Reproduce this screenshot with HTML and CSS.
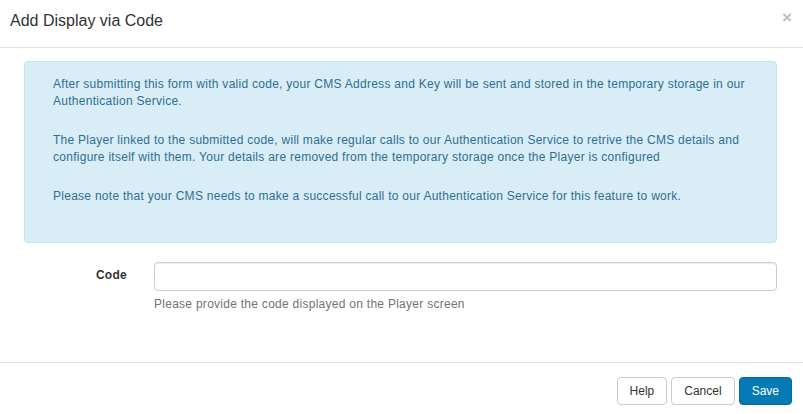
FILE: index.html
```html
<!DOCTYPE html>
<html lang="en">
<head>
<meta charset="utf-8">
<title>Add Display via Code</title>
<link rel="stylesheet" href="styles.css">
</head>
<body>
<div class="modal">
  <div class="modal-header">
    <h4 class="modal-title">Add Display via Code</h4>
    <button class="close" type="button" aria-label="Close">&times;</button>
  </div>
  <div class="modal-body">
    <div class="alert">
      <p>After submitting this form with valid code, your CMS Address and Key will be sent and stored in the temporary storage in our Authentication Service.</p>
      <p>The Player linked to the submitted code, will make regular calls to our Authentication Service to retrive the CMS details and configure itself with them. Your details are removed from the temporary storage once the Player is configured</p>
      <p>Please note that your CMS needs to make a successful call to our Authentication Service for this feature to work.</p>
    </div>
    <div class="form-group">
      <label class="control-label" for="code">Code</label>
      <div class="control">
        <input class="form-control" id="code" type="text">
        <span class="help-block">Please provide the code displayed on the Player screen</span>
      </div>
    </div>
  </div>
  <div class="modal-footer">
    <button class="btn" type="button">Help</button>
    <button class="btn" type="button">Cancel</button>
    <button class="btn btn-primary" type="button">Save</button>
  </div>
</div>
</body>
</html>
```
FILE: styles.css
```css
* { box-sizing: border-box; }
html, body { margin: 0; padding: 0; background: #fff; }
body {
  font-family: "Liberation Sans", Arial, sans-serif;
  font-size: 12px;
  line-height: 1.42857;
  color: #333;
}
.modal { width: 803px; }
.modal-header {
  position: relative;
  padding: 10px 10px 14px;
  border-bottom: 1px solid #e5e5e5;
}
.modal-title {
  margin: 0;
  font-size: 16px;
  font-weight: normal;
  line-height: 1.42857;
  color: #333;
}
.close {
  position: absolute;
  top: 8px;
  right: 11px;
  padding: 0;
  border: 0;
  background: none;
  font-family: "Liberation Sans", Arial, sans-serif;
  font-size: 17px;
  font-weight: bold;
  line-height: 20px;
  color: #bdbdbd;
  cursor: pointer;
}
.modal-body {
  padding: 13px 26px 49px 24px;
  letter-spacing: 0.27px;
}
.alert {
  padding: 14px 28px 14px;
  margin-bottom: 19px;
  background: #d9edf7;
  border: 1px solid #bce8f1;
  border-radius: 4px;
  color: #2d6f92;
}
.alert p { margin: 0 0 22px; }
.form-group {
  display: grid;
  grid-template-columns: 130px 1fr;
}
.control-label {
  text-align: right;
  padding: 5px 27px 0 0;
  font-weight: bold;
  color: #333;
}
.form-control {
  display: block;
  width: 100%;
  height: 29px;
  padding: 5px 10px;
  font: inherit;
  color: #555;
  background: #fff;
  border: 1px solid #ccc;
  border-radius: 4px;
  box-shadow: inset 0 1px 1px rgba(0,0,0,.075);
}
.help-block {
  display: block;
  margin-top: 5px;
  color: #737373;
}
.modal-footer {
  display: flex;
  justify-content: flex-end;
  gap: 4px;
  padding: 14px 11px 8px;
  border-top: 1px solid #e5e5e5;
}
.btn {
  height: 28px;
  padding: 4px 12px;
  font: inherit;
  line-height: 18px;
  color: #333;
  background: #fff;
  border: 1px solid #ccc;
  border-radius: 4px;
  cursor: pointer;
}
.btn-primary {
  color: #fff;
  background: #067ab4;
  border-color: #05699c;
}
```
